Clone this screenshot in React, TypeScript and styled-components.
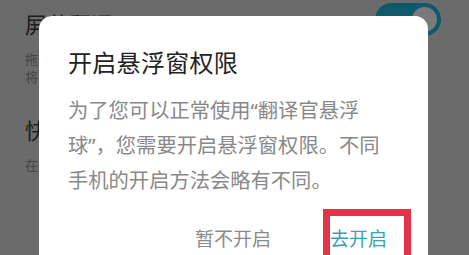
import React from "react";
import styled, { createGlobalStyle } from "styled-components";

const Global = createGlobalStyle`
  html, body { margin: 0; padding: 0; }
  body { font-family: "Noto Sans CJK SC", "Noto Sans", sans-serif; }
`;

const Screen = styled.div`
  position: relative;
  width: 469px;
  height: 255px;
  overflow: hidden;
  background: #6b6b6b;
`;

const SettingsList = styled.div`
  display: flex;
  flex-direction: column;
  padding: 0 0 0 25px;
`;

const SettingRow = styled.div<{ $top: number }>`
  display: flex;
  align-items: flex-start;
  justify-content: space-between;
  padding-top: ${(p) => p.$top}px;
  padding-right: 28px;
`;

const SettingText = styled.div`
  display: flex;
  flex-direction: column;
`;

const SettingTitle = styled.div`
  font-size: 22px;
  line-height: 30px;
  color: #1c1c1c;
`;

const SettingDesc = styled.div`
  font-size: 13px;
  line-height: 18px;
  color: #454545;
  margin-top: 12px;
`;

const Toggle = styled.div`
  width: 66px;
  height: 33px;
  border-radius: 17px;
  background: #0e5a6a;
  display: flex;
  align-items: center;
  justify-content: flex-end;
  padding: 0 4px;
  box-sizing: border-box;
  margin-top: -5px;
`;

const Knob = styled.div`
  width: 25px;
  height: 25px;
  border-radius: 50%;
  background: #7a7a7a;
`;

const Dialog = styled.div`
  position: absolute;
  left: 39px;
  top: 16px;
  width: 389px;
  height: 270px;
  background: #ffffff;
  border-radius: 13px;
  box-sizing: border-box;
  padding: 29px 0 0 29px;
  display: flex;
  flex-direction: column;
`;

const DialogTitle = styled.div`
  font-size: 24px;
  line-height: 34px;
  color: #222222;
  letter-spacing: 0.3px;
`;

const DialogBody = styled.div`
  margin-top: 14px;
  width: 322px;
  font-family: "Noto Sans", "Noto Sans CJK SC", sans-serif;
  font-size: 20.3px;
  line-height: 35px;
  color: #888888;
`;

const Actions = styled.div`
  display: flex;
  justify-content: flex-end;
  align-items: center;
  gap: 59px;
  padding-right: 41px;
  margin-top: 28px;
`;

const ActionButton = styled.div<{ $primary?: boolean }>`
  position: relative;
  font-size: 19px;
  line-height: 24px;
  color: ${(p) => (p.$primary ? "#3a9fb4" : "#8a8a8a")};
`;

const Highlight = styled.div`
  position: absolute;
  left: -7px;
  top: -17px;
  width: 88px;
  height: 70px;
  border: 7px solid #e3334a;
  box-sizing: border-box;
  pointer-events: none;
`;

export default function App() {
  return (
    <>
      <Global />
      <Screen>
        <SettingsList>
          <SettingRow $top={8}>
            <SettingText>
              <SettingTitle>屏幕翻译</SettingTitle>
              <SettingDesc>
                拖动悬浮球到需要翻译的区域
                <br />
                将自动识别并翻译屏幕内容
              </SettingDesc>
            </SettingText>
            <Toggle>
              <Knob />
            </Toggle>
          </SettingRow>
          <SettingRow $top={28}>
            <SettingText>
              <SettingTitle>快捷翻译</SettingTitle>
              <SettingDesc>在任意界面复制文字即可翻译</SettingDesc>
            </SettingText>
          </SettingRow>
        </SettingsList>
        <Dialog>
          <DialogTitle>开启悬浮窗权限</DialogTitle>
          <DialogBody>
            为了您可以正常使用“翻译官悬浮球”，您需要开启悬浮窗权限。不同手机的开启方法会略有不同。
          </DialogBody>
          <Actions>
            <ActionButton>暂不开启</ActionButton>
            <ActionButton $primary>
              去开启
              <Highlight />
            </ActionButton>
          </Actions>
        </Dialog>
      </Screen>
    </>
  );
}
